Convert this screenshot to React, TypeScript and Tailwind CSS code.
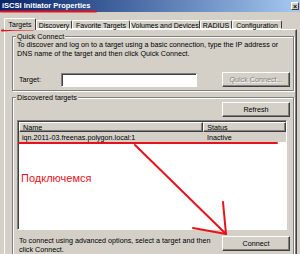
const btn =
  "flex items-center justify-center bg-[#d4d0c8] border border-t-white border-l-white border-r-[#404040] border-b-[#404040] shadow-[inset_-1px_-1px_0_#808080]";

const groupBox =
  "relative ml-[4px] w-[282px] border border-[#808080] shadow-[inset_1px_1px_0_#fff,1px_1px_0_#fff]";

const tabs = [
  { label: "Targets", w: "w-[32px]", active: true },
  { label: "Discovery", w: "w-[36px]" },
  { label: "Favorite Targets", w: "w-[58px]" },
  { label: "Volumes and Devices", w: "w-[70px]" },
  { label: "RADIUS", w: "w-[32px]" },
  { label: "Configuration", w: "w-[50px]" },
];

function TitleBar() {
  return (
    <div className="flex h-[12px] items-center justify-between bg-gradient-to-r from-[#0a246a] to-[#a6caf0] pl-[2px] pr-[1px]">
      <span className="text-[7.5px] font-bold leading-none text-white">iSCSI Initiator Properties</span>
      <span className="flex h-[8px] w-[8px] items-center justify-center border border-t-white border-l-white border-r-[#404040] border-b-[#404040] bg-[#d4d0c8] text-[7px] font-bold leading-none text-black">
        ×
      </span>
    </div>
  );
}

function Tabs() {
  return (
    <div className="relative z-10 -mb-[1px] flex h-[18px] items-end whitespace-nowrap pl-[4px] text-[7px]">
      {tabs.map((t) =>
        t.active ? (
          <div
            key={t.label}
            className={`${t.w} flex h-[12px] items-center justify-center rounded-t-[2px] border-l border-t border-r border-l-white border-t-white border-r-[#404040] bg-[#d4d0c8]`}
          >
            {t.label}
          </div>
        ) : (
          <div
            key={t.label}
            className={`${t.w} mb-[1px] flex h-[9px] items-center justify-center rounded-t-[2px] border-l border-t border-r border-l-white border-t-white border-r-[#404040] border-b border-b-white bg-[#d4d0c8] pt-[1px]`}
          >
            {t.label}
          </div>
        )
      )}
    </div>
  );
}

function QuickConnect() {
  return (
    <div className={`${groupBox} mt-[6px] h-[55px] pl-[4px] pr-[3px] pt-[3px]`}>
      <span className="absolute -top-[5px] left-[3px] bg-[#d4d0c8] px-[1px] leading-[9px]">Quick Connect</span>
      <p className="leading-[9px]">
        To discover and log on to a target using a basic connection, type the IP address or DNS name of the target
        and then click Quick Connect.
      </p>
      <div className="mt-[14px] flex items-center">
        <span className="ml-[2px] w-[42px]">Target:</span>
        <div className="h-[14px] w-[136px] border border-t-[#808080] border-l-[#808080] border-r-white border-b-white bg-white shadow-[inset_1px_1px_0_#404040]" />
        <div className={`${btn} ml-auto h-[15px] w-[68px] text-[#808080] [text-shadow:1px_1px_0_#fff]`}>
          Quick Connect...
        </div>
      </div>
    </div>
  );
}

function TargetList() {
  return (
    <div className="ml-[4px] mt-[3px] flex h-[110px] w-[270px] flex-col border border-t-[#808080] border-l-[#808080] border-r-white border-b-white bg-white shadow-[inset_1px_1px_0_#404040]">
      <div className="ml-[1px] mt-[1px] flex h-[10px]">
        <div className={`${btn} w-[185px] justify-start pl-[3px]`}>Name</div>
        <div className={`${btn} w-[83px] justify-start pl-[3px]`}>Status</div>
      </div>
      <div className="ml-[1px] flex h-[10px] items-center bg-[#d4d0c8]">
        <span className="w-[185px] pl-[3px]">iqn.2011-03.freenas.polygon.local:1</span>
        <span className="pl-[3px]">Inactive</span>
      </div>
    </div>
  );
}

function Discovered() {
  return (
    <div className={`${groupBox} mt-[6px] h-[180px] pr-[3px] pt-[4px]`}>
      <span className="absolute -top-[5px] left-[3px] bg-[#d4d0c8] px-[1px] leading-[9px]">Discovered targets</span>
      <div className="flex justify-end">
        <div className={`${btn} h-[15px] w-[68px]`}>Refresh</div>
      </div>
      <TargetList />
      <div className="mt-[6px] flex items-start">
        <p className="ml-[6px] w-[200px] leading-[9px]">
          To connect using advanced options, select a target and then click Connect.
        </p>
        <div className={`${btn} ml-auto h-[15px] w-[68px]`}>Connect</div>
      </div>
    </div>
  );
}

function Marks() {
  return (
    <>
      <svg className="pointer-events-none absolute inset-0" width="300" height="254" viewBox="0 0 300 254">
        <g stroke="#e8121c" strokeWidth="2" fill="none" strokeLinecap="round">
          <line x1="1" y1="11.5" x2="96" y2="11.5" />
          <path d="M2 30.5 Q18 29 33 29.5" />
          <line x1="19" y1="143" x2="277" y2="143" />
          <line x1="135" y1="145" x2="226" y2="234" />
          <line x1="223" y1="202" x2="226" y2="234" />
          <line x1="193" y1="228" x2="226" y2="234" />
        </g>
      </svg>
      <span className="pointer-events-none absolute left-[21px] top-[172px] text-[11px] leading-[12px] text-[#e8121c]">
        Подключемся
      </span>
    </>
  );
}

export default function App() {
  return (
    <div className="relative h-[254px] w-[300px] overflow-hidden bg-[#d4d0c8] font-['Liberation_Sans',Arial,sans-serif] text-[7.2px] leading-[9px] text-black">
      <TitleBar />
      <Tabs />
      <div className="ml-[4px] h-[226px] w-[293px] border-l border-t border-r border-l-white border-t-white border-r-[#404040] pl-[3px] shadow-[inset_-1px_0_0_#808080]">
        <QuickConnect />
        <Discovered />
      </div>
      <Marks />
    </div>
  );
}
